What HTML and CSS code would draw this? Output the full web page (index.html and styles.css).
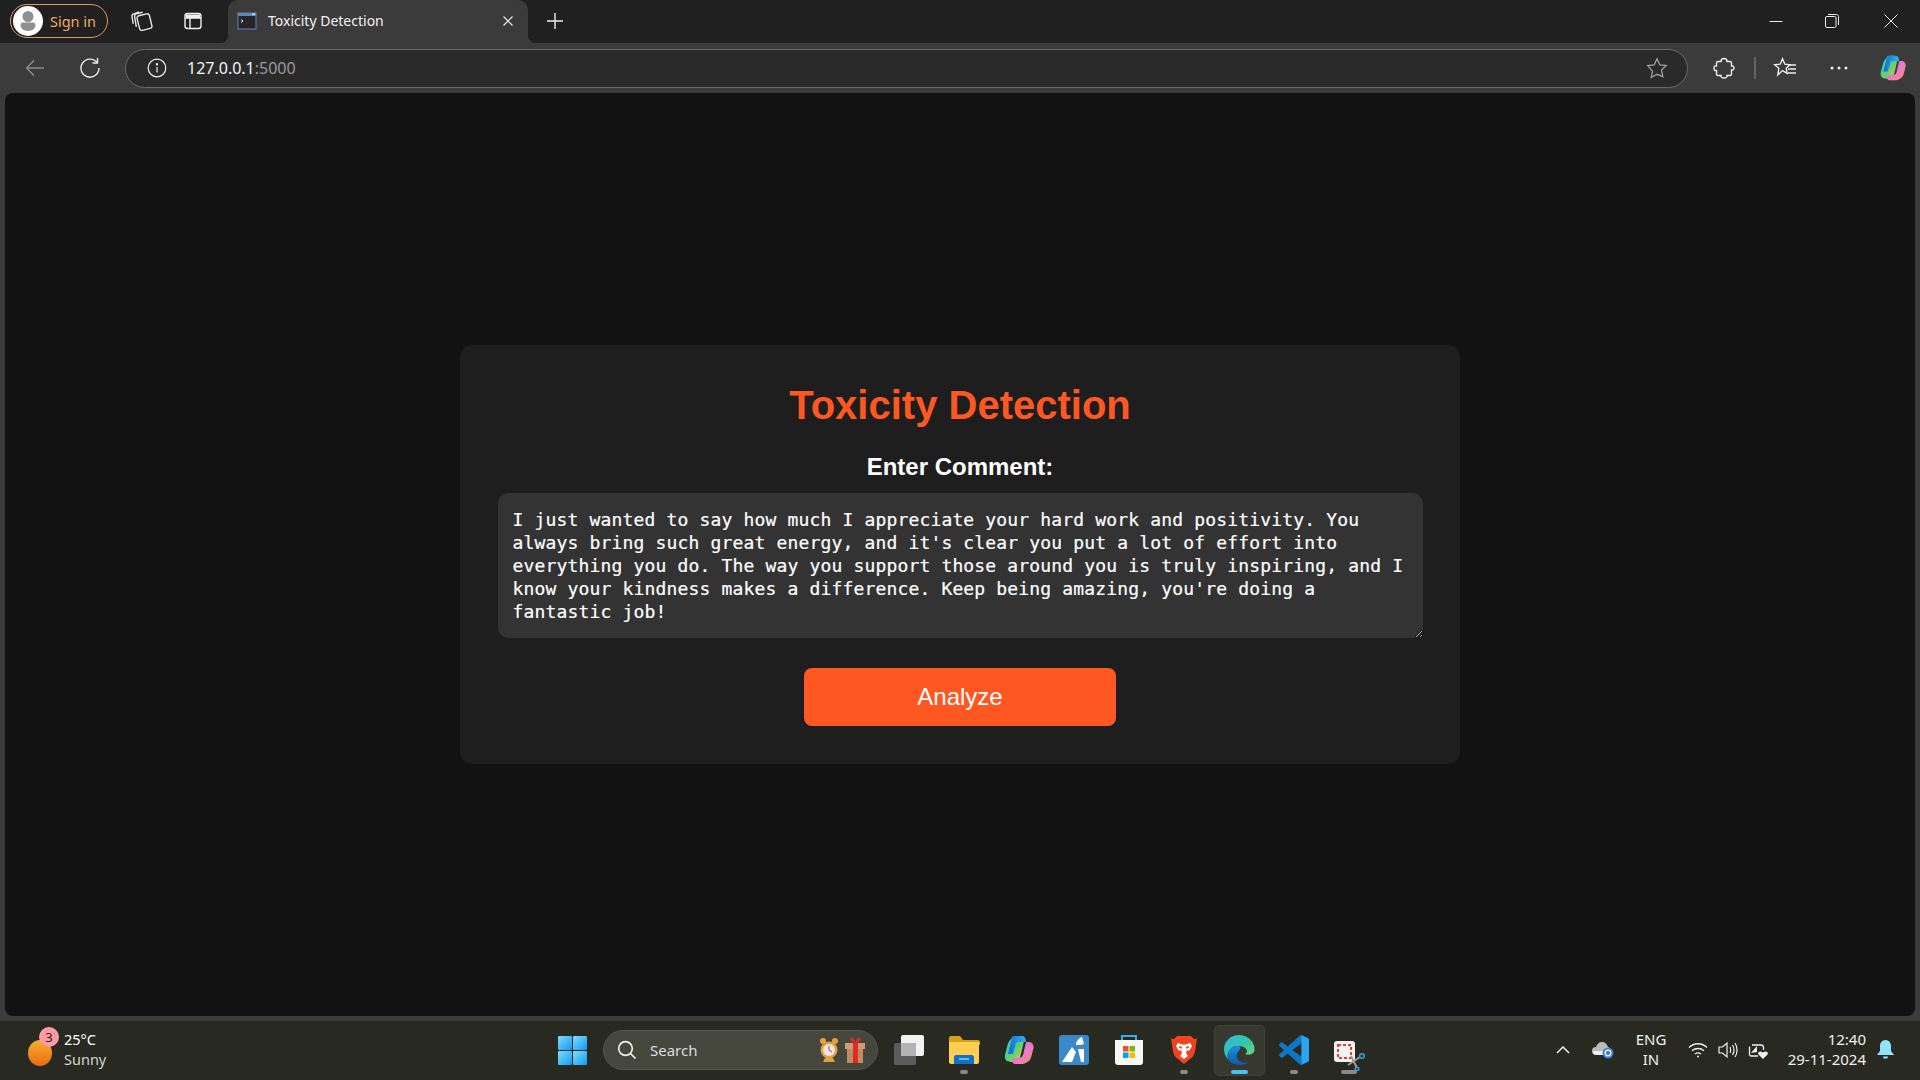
FILE: index.html
```html
<!DOCTYPE html>
<html>
    <head>
        <meta charset="utf-8">
        <title>Toxicity Detection</title>
        <link rel="stylesheet" href="styles.css">
    </head>
    <body>
        <svg class="defs" width="0" height="0">
            <defs>
                <linearGradient id="copA" x1="0" y1="0" x2="1" y2="1">
                    <stop offset="0" stop-color="#2fc4e8"/>
                    <stop offset="0.5" stop-color="#4fd37a"/>
                    <stop offset="1" stop-color="#f4c430"/>
                </linearGradient>
                <linearGradient id="copB" x1="0" y1="0" x2="1" y2="1">
                    <stop offset="0" stop-color="#c86be0"/>
                    <stop offset="0.6" stop-color="#ee7dc0"/>
                    <stop offset="1" stop-color="#f78a5c"/>
                </linearGradient>
                <linearGradient id="copC" x1="0" y1="0" x2="1" y2="0">
                    <stop offset="0" stop-color="#1668d8"/>
                    <stop offset="1" stop-color="#2fb4ee"/>
                </linearGradient>
                <linearGradient id="edgeA" x1="0" y1="0" x2="1" y2="1">
                    <stop offset="0" stop-color="#2fb6e8"/>
                    <stop offset="0.55" stop-color="#35c6a4"/>
                    <stop offset="1" stop-color="#7ee36a"/>
                </linearGradient>
                <linearGradient id="edgeB" x1="0" y1="0" x2="0" y2="1">
                    <stop offset="0" stop-color="#1a8fe0"/>
                    <stop offset="1" stop-color="#0c5aa8"/>
                </linearGradient>
                <linearGradient id="winBlue" x1="0" y1="0" x2="1" y2="1">
                    <stop offset="0" stop-color="#7fdcfb"/>
                    <stop offset="1" stop-color="#0f9bf2"/>
                </linearGradient>
                <linearGradient id="orb" x1="0" y1="0" x2="0" y2="1">
                    <stop offset="0" stop-color="#f5b12a"/>
                    <stop offset="1" stop-color="#ea6a14"/>
                </linearGradient>
                <symbol id="copilot" viewBox="0 0 32 32">
                    <path d="M11 2h7c2 0 3 1 3.500 3L17 24c-.6 2.500-2 4-4.500 4H8c-4 0-7-2-6-7l2-8c1-4 2-6 4-8 1-1.500 2-3 3-3z" fill="url(#copA)"/>
                    <path d="M11 2h8c2 0 3 1 3.500 3l.5 3h-7c-2 0-3 1-3.500 3L10 20H5l3-12c1-3 1.500-6 3-6z" fill="url(#copC)"/>
                    <path d="M23 8h3c3 0 5 3 4.500 6l-2 8c-1 4-3 6-6 7-1 .4-2 1-3 1h-7c-2 0-3-1-3.500-3L10 24h6c2 0 3-1 4-3z" fill="url(#copB)"/>
                </symbol>
            </defs>
        </svg>

        <div class="window">
            <div class="tabstrip">
                <div class="signin">
                    <span class="avatar">
                        <svg width="30" height="30" viewBox="0 0 30 30">
                            <circle cx="15" cy="15" r="15" fill="#fff"/>
                            <circle cx="15" cy="10.500" r="5.500" fill="#8f8f8f"/>
                            <path d="M7.500 19c0-1.500 1-2.500 2.500-2.500h10c1.500 0 2.500 1 2.500 2.500 0 3-3 6-7.500 6s-7.500-3-7.500-6z" fill="#8f8f8f"/>
                        </svg>
                    </span>
                    <span>Sign in</span>
                </div>
                <div class="strip-btn strip-first">
                    <svg width="23" height="23" viewBox="0 0 20 20" fill="none" stroke="#e8e8e8" stroke-width="1.200">
                        <rect x="7" y="5" width="11" height="13" rx="2" transform="rotate(-14 12 11)"/>
                        <path d="M5.500 15.500 4 6.500c-.2-1.200.4-2 1.500-2.300L11 2.800"/>
                        <path d="M2.800 13 1.700 6.500c-.2-1.200.4-2 1.500-2.300L8 2.500"/>
                    </svg>
                </div>
                <div class="strip-btn">
                    <svg width="20" height="20" viewBox="0 0 20 20" fill="none" stroke="#f0f0f0" stroke-width="1.400">
                        <rect x="2" y="2.500" width="16" height="15" rx="2.500"/>
                        <path d="M2 7h16M7 7v10.500"/>
                        <path d="M3 3.500h14V7H3z" fill="#f0f0f0" stroke="none"/>
                    </svg>
                </div>
                <div class="tab">
                    <svg class="favicon" width="20" height="18" viewBox="0 0 20 18">
                        <rect x="0.500" y="0.500" width="19" height="17" fill="#5f87b8"/>
                        <rect x="1.500" y="4" width="17" height="12.500" fill="#26262a"/>
                        <rect x="15" y="1.500" width="3" height="1.500" fill="#d8d8d8"/>
                        <path d="M4 7.500 6 9l-2 1.500" fill="none" stroke="#e8e8e8" stroke-width="1"/>
                    </svg>
                    <span class="tab-title">Toxicity Detection</span>
                    <svg class="tab-close" width="12" height="12" viewBox="0 0 12 12" stroke="#eee" stroke-width="1.200">
                        <path d="M1.500 1.500l9 9M10.500 1.500l-9 9"/>
                    </svg>
                </div>
                <div class="strip-btn strip-new">
                    <svg width="18" height="18" viewBox="0 0 18 18" stroke="#eee" stroke-width="1.400">
                        <path d="M9 1v16M1 9h16"/>
                    </svg>
                </div>
                <div class="win-controls">
                    <div class="win-btn">
                        <svg width="14" height="14" viewBox="0 0 14 14" stroke="#eee" stroke-width="1">
                            <path d="M0.500 7.500h13"/>
                        </svg>
                    </div>
                    <div class="win-btn">
                        <svg width="14" height="14" viewBox="0 0 14 14" fill="none" stroke="#eee" stroke-width="1">
                            <rect x="0.500" y="2.500" width="10.500" height="11" rx="1.500"/>
                            <path d="M3 .5h8.500c1 0 2 1 2 2V11"/>
                        </svg>
                    </div>
                    <div class="win-btn win-close">
                        <svg width="14" height="14" viewBox="0 0 14 14" stroke="#eee" stroke-width="1">
                            <path d="M.5.5l13 13M13.500.5l-13 13"/>
                        </svg>
                    </div>
                </div>
            </div>

            <div class="toolbar">
                <div class="tool tool-back">
                    <svg width="20" height="20" viewBox="0 0 20 20" fill="none" stroke="#8c8c8c" stroke-width="1.400">
                        <path d="M19 10H1.500M9 2.500 1.500 10 9 17.500"/>
                    </svg>
                </div>
                <div class="tool tool-reload">
                    <svg width="22" height="22" viewBox="0 0 22 22" fill="none" stroke="#eee" stroke-width="1.400">
                        <path d="M18 5.500A9 9 0 1 0 20 11"/>
                        <path d="M18.500 1v5h-5"/>
                    </svg>
                </div>
                <div class="address">
                    <svg class="info" width="20" height="20" viewBox="0 0 20 20" fill="none" stroke="#eee" stroke-width="1.200">
                        <circle cx="10" cy="10" r="8.800"/>
                        <path d="M10 9v5.500"/>
                        <circle cx="10" cy="6.200" r=".6" fill="#eee"/>
                    </svg>
                    <span class="url">127.0.0.1<span class="url-port">:5000</span></span>
                    <svg class="star" width="22" height="22" viewBox="0 0 22 22" fill="none" stroke="#a0a0a0" stroke-width="1.300">
                        <path d="M11 1.800l2.800 6 6.500.8-4.800 4.500 1.300 6.500L11 17.300l-5.800 3.300 1.300-6.500L1.700 8.600l6.500-.8z"/>
                    </svg>
                </div>
                <div class="tool tool-first">
                    <svg width="22" height="22" viewBox="0 0 22 22" fill="none" stroke="#eee" stroke-width="1.400">
                        <path d="M8 4.500C8 2.500 9.500 1.500 11 1.500s3 1 3 3h3A1.500 1.500 0 0 1 18.500 6v3c2-.5 2.500 1 2.500 2s-.5 2.500-2.500 2v4a1.500 1.500 0 0 1-1.500 1.500h-3c.5 1.500-1 2.500-3 2.500s-3.500-1-3-2.500H5A1.500 1.500 0 0 1 3.500 17v-3.500C1.500 14 1 12.500 1 11s.5-2.500 2.500-2V6A1.500 1.500 0 0 1 5 4.500z"/>
                    </svg>
                </div>
                <span class="tool-sep"></span>
                <div class="tool tool-favs">
                    <svg width="24" height="22" viewBox="0 0 24 22" fill="none" stroke="#eee" stroke-width="1.400">
                        <path d="M9.500 1.800l2.300 5.400 5.200.5-3.800 3.600 1 5-4.700-2.700-4.700 4.300 1-6.600L1.600 7.700l5.600-.5z"/>
                        <path d="M15 8h8M15 12h8M15 16h8"/>
                    </svg>
                </div>
                <div class="tool">
                    <svg width="18" height="4" viewBox="0 0 18 4" fill="#eee">
                        <circle cx="2" cy="2" r="1.500"/>
                        <circle cx="9" cy="2" r="1.500"/>
                        <circle cx="16" cy="2" r="1.500"/>
                    </svg>
                </div>
                <div class="tool">
                    <svg width="28" height="28"><use href="#copilot"/></svg>
                </div>
            </div>

            <div class="viewport">
                <div class="container">
                    <h1>Toxicity Detection</h1>
                    <label class="comment-label" for="comment">Enter Comment:</label>
                    <textarea id="comment" class="comment" spellcheck="false">I just wanted to say how much I appreciate your hard work and positivity. You always bring such great energy, and it's clear you put a lot of effort into everything you do. The way you support those around you is truly inspiring, and I know your kindness makes a difference. Keep being amazing, you're doing a fantastic job!</textarea>
                    <button class="analyze">Analyze</button>
                </div>
            </div>
        </div>

        <footer class="taskbar">
            <div class="weather">
                <span class="orb">
                    <svg width="26" height="36" viewBox="0 0 26 36">
                        <ellipse cx="12" cy="21" rx="12" ry="13" fill="url(#orb)"/>
                    </svg>
                    <span class="badge">3</span>
                </span>
                <div class="weather-text">
                    <span>25°C</span>
                    <span class="weather-sub">Sunny</span>
                </div>
            </div>
            <div class="start">
                <svg width="29" height="29" viewBox="0 0 29 29" fill="url(#winBlue)">
                    <rect width="14" height="14" rx="1"/>
                    <rect x="15" width="14" height="14" rx="1"/>
                    <rect y="15" width="14" height="14" rx="1"/>
                    <rect x="15" y="15" width="14" height="14" rx="1"/>
                </svg>
            </div>
            <div class="search">
                <svg width="20" height="20" viewBox="0 0 20 20" fill="none" stroke="#eee" stroke-width="1.700">
                    <circle cx="8.500" cy="8.500" r="6.800"/>
                    <path d="M13.500 13.500l5 5"/>
                </svg>
                <span class="search-text">Search</span>
                <svg class="search-alarm" width="20" height="26" viewBox="0 0 20 26">
                    <circle cx="4" cy="4" r="3" fill="#e9a13b"/>
                    <circle cx="16" cy="4" r="3" fill="#e9a13b"/>
                    <circle cx="10" cy="13" r="8.500" fill="#d9a441"/>
                    <circle cx="10" cy="13" r="6" fill="#f4e2e6"/>
                    <path d="M10 9v4l3 2" fill="none" stroke="#8a5a44" stroke-width="1"/>
                    <path d="M4 25l2-4h8l2 4z" fill="#d9a441"/>
                </svg>
                <svg class="search-gift" width="20" height="26" viewBox="0 0 20 26">
                    <rect x="2" y="9" width="16" height="17" fill="#c08a62"/>
                    <rect x="0" y="6" width="20" height="6" fill="#d19a70"/>
                    <rect x="8" y="6" width="5" height="20" fill="#e02a24"/>
                    <path d="M10.500 6C6 6 4 1 6 .5c2-.5 4 2.500 4.500 5.500 .5-3 2.500-6 4.500-5.500C17 1 15 6 10.500 6z" fill="#e02a24"/>
                </svg>
            </div>
            <div class="pinned">
                <div class="pin">
                    <svg width="32" height="32" viewBox="0 0 32 32">
                        <rect x="1" y="9" width="22" height="22" rx="2" fill="#5c5c5c"/>
                        <rect x="8" y="1" width="23" height="21" rx="2" fill="#f2f2f2"/>
                        <rect x="8" y="9" width="15" height="13" fill="#b4b4b4"/>
                    </svg>
                </div>
                <div class="pin pin-open">
                    <svg width="32" height="30" viewBox="0 0 32 30">
                        <path d="M1 3c0-1 .6-2 2-2h9l3 4h15c1 0 2 1 2 2v3H1z" fill="#d8a214"/>
                        <path d="M1 7h30v20c0 1-1 2-2 2H3c-1 0-2-1-2-2z" fill="#fdce50"/>
                        <path d="M6 29V22c0-1 1-2 2-2h16c1 0 2 1 2 2v7z" fill="#0f72c9"/>
                        <path d="M11 24h10" stroke="#8fd0f5" stroke-width="1.500"/>
                    </svg>
                </div>
                <div class="pin">
                    <svg width="32" height="32"><use href="#copilot"/></svg>
                </div>
                <div class="pin">
                    <svg width="30" height="30" viewBox="0 0 30 30">
                        <rect width="30" height="30" rx="3" fill="#3b88c8"/>
                        <path d="M3 27 13 12l4 5-4 10z" fill="#fff"/>
                        <path d="M17 10c0-4 3-7 6-8l2 7-3 1z" fill="#fff"/>
                        <path d="M19 14h6v13h-3z" fill="#fff"/>
                    </svg>
                </div>
                <div class="pin">
                    <svg width="30" height="32" viewBox="0 0 30 32">
                        <path d="M8 6V2h14v4" fill="none" stroke="#2fb2e8" stroke-width="2"/>
                        <path d="M1 6h28v22c0 2-1 3-3 3H4c-2 0-3-1-3-3z" fill="#f7f7f7"/>
                        <rect x="9" y="12" width="5.500" height="5.500" fill="#f25022"/>
                        <rect x="15.500" y="12" width="5.500" height="5.500" fill="#7fba00"/>
                        <rect x="9" y="18.500" width="5.500" height="5.500" fill="#00a4ef"/>
                        <rect x="15.500" y="18.500" width="5.500" height="5.500" fill="#ffb900"/>
                    </svg>
                </div>
                <div class="pin pin-open">
                    <svg width="26" height="30" viewBox="0 0 26 30">
                        <path d="M6 1h14l3 3 3-.5L24 16c-.6 4-2 6-5 8l-6 5-6-5c-3-2-4.400-4-5-8L0 3.500 3 4z" fill="#f0431e"/>
                        <path d="M7 8l4 1.500h4L19 8l2 3-3 5-2-1-1 3 2 3-4 3-4-3 2-3-1-3-2 1-3-5z" fill="#fff"/>
                        <path d="M8 12l3 1M18 12l-3 1" stroke="#f0431e" stroke-width="1.500"/>
                    </svg>
                </div>
                <div class="pin pin-active">
                    <svg width="32" height="32" viewBox="0 0 32 32">
                        <path d="M16 1C7 1 1 8 1 15c0 4 1.500 8 4 10-2-7 3-13 10-13 6 0 9 3 9 5 0 1.500-1 2.500-2 3 5 2 9-.5 9.500-4C32 8 25 1 16 1z" fill="url(#edgeA)"/>
                        <path d="M15 12C8 12 3 18 5 25c2.500 4 7 6 12 6 4 0 7-1 9-3-3 1.500-10 1-12-4-1-3 0-6 3-8.500 1-1 0-3.500-2-3.500z" fill="url(#edgeB)"/>
                    </svg>
                </div>
                <div class="pin pin-open">
                    <svg width="30" height="30" viewBox="0 0 100 100">
                        <path d="M70.900 99.300a6.200 6.200 0 0 0 5-.2l20.600-9.900A6.250 6.250 0 0 0 100 83.600V16.400a6.250 6.250 0 0 0-3.500-5.600L75.900.9a6.200 6.200 0 0 0-7.100 1.200L29.400 38.100 12.200 25a4.200 4.200 0 0 0-5.300.2l-5.500 5.100a4.200 4.200 0 0 0 0 6.200L16.300 50 1.400 63.600a4.200 4.200 0 0 0 0 6.200l5.500 5a4.200 4.200 0 0 0 5.300.2l17.200-13.100 39.400 35.900a6.200 6.200 0 0 0 2.100 1.400zM75 27.300 45.100 50 75 72.700z" fill="#0e76c4" fill-rule="evenodd"/>
                        <path d="M75 .6l21.500 10.200a6.250 6.250 0 0 1 3.500 5.600v67.200a6.250 6.250 0 0 1-3.500 5.600L75 99.500z" fill="#2ca5ee"/>
                    </svg>
                </div>
                <div class="pin pin-open pin-snip">
                    <svg width="32" height="32" viewBox="0 0 32 32">
                        <rect x="1" y="2" width="21" height="21" rx="3" fill="#f2f2f2"/>
                        <rect x="5" y="6" width="13" height="13" fill="none" stroke="#d9432e" stroke-width="2" stroke-dasharray="3 2"/>
                        <path d="M18 17l6 12M27 18l-12 8" stroke="#9a9a9a" stroke-width="2"/>
                        <circle cx="29" cy="17" r="2.300" fill="none" stroke="#2fa4dc" stroke-width="1.500"/>
                        <circle cx="24" cy="30" r="1.800" fill="none" stroke="#2fa4dc" stroke-width="1.500"/>
                    </svg>
                </div>
            </div>
            <div class="tray">
                <div class="tray-slot">
                    <svg width="14" height="8" viewBox="0 0 14 8" fill="none" stroke="#eee" stroke-width="1.500">
                        <path d="M1 7l6-6 6 6"/>
                    </svg>
                </div>
                <div class="tray-slot tray-cloud">
                    <svg width="22" height="18" viewBox="0 0 22 18">
                        <path d="M4 14a4 4 0 0 1 0-8c1-3 3-5 6-5 3 0 5 2 6 5h1v8z" fill="#b9b9b9"/>
                        <path d="M1 10h11v4H4c-2 0-3-2-3-4z" fill="#eee"/>
                        <circle cx="16" cy="12" r="5.500" fill="#3b82d8"/>
                        <circle cx="16" cy="12" r="2.800" fill="none" stroke="#fff" stroke-width="1.200"/>
                    </svg>
                </div>
                <div class="lang">
                    <span>ENG</span>
                    <span>IN</span>
                </div>
                <div class="tray-slot tray-wifi">
                    <svg width="20" height="16" viewBox="0 0 20 16" fill="none" stroke="#eee" stroke-width="1.400">
                        <path d="M1 5.500c5-5 13-5 18 0M4 8.800c3.500-3 8.500-3 12 0M7 12c2-1.500 4-1.500 6 0"/>
                        <circle cx="10" cy="14.500" r="1" fill="#eee" stroke="none"/>
                    </svg>
                </div>
                <div class="tray-slot">
                    <svg width="20" height="18" viewBox="0 0 20 18" fill="none" stroke="#eee" stroke-width="1.200">
                        <path d="M1 6h3.500L9 2v14l-4.500-4H1z"/>
                        <path d="M12 6c1 2 1 4 0 6M14.500 4c1.800 3 1.800 7 0 10M17 2c2.700 4 2.700 10 0 14"/>
                    </svg>
                </div>
                <div class="tray-slot">
                    <svg width="20" height="20" viewBox="0 0 20 20">
                        <path d="M4 5h9c1.500 0 2.500 1 2.500 2.500V10" fill="none" stroke="#eee" stroke-width="1.300"/>
                        <path d="M1.500 6.500v8c0 1 .6 1.500 1.500 1.500h7" fill="none" stroke="#eee" stroke-width="1.300"/>
                        <path d="M5 5 4 1M3 13l6-7v6z" fill="#eee"/>
                        <path d="M15 19l-4.500-4.500c-1.500-2 1.500-4.500 4.500-2 3-2.500 6 0 4.500 2z" fill="#eee"/>
                    </svg>
                </div>
                <div class="clock">
                    <span>12:40</span>
                    <span>29-11-2024</span>
                </div>
                <div class="tray-slot tray-bell">
                    <svg width="17" height="20" viewBox="0 0 17 20" fill="#8fe4fb">
                        <path d="M8.500 0C5 0 3 3 3 6v5l-3 4h17l-3-4V6c0-3-2-6-5.500-6z"/>
                        <path d="M6 16.500h5c0 3-5 3-5 0z"/>
                    </svg>
                </div>
            </div>
        </footer>
    </body>
</html>
```

FILE: styles.css
```css
* {
    box-sizing: border-box;
}

html, body {
    margin: 0;
    height: 100%;
}

body {
    width: 1920px;
    height: 1080px;
    overflow: hidden;
    display: flex;
    flex-direction: column;
    background-color: #3b3b3b;
    font-family: "Noto Sans", "Liberation Sans", sans-serif;
    color: #fff;
}

.defs {
    position: absolute;
}

/* browser window */
.window {
    height: 1021px;
    display: flex;
    flex-direction: column;
    padding-bottom: 5px;
}

.tabstrip {
    height: 43px;
    flex: none;
    padding-bottom: 2px;
    display: flex;
    align-items: center;
    background-color: #202020;
}

.signin {
    width: 98px;
    height: 34px;
    margin-left: 10px;
    padding-left: 3px;
    display: flex;
    align-items: center;
    gap: 7px;
    border: 1px solid #e29a58;
    border-radius: 17px;
    font-size: 14.500px;
    color: #f0a766;
}

.avatar {
    height: 30px;
    width: 30px;
    flex: none;
    margin-left: -1px;
}

.strip-btn {
    width: 36px;
    height: 36px;
    display: flex;
    align-items: center;
    justify-content: center;
}

.strip-first {
    margin-left: 15px;
    margin-right: 16px;
}

.strip-new {
    margin-left: 9px;
}

.tab {
    position: relative;
    width: 300px;
    height: 43px;
    margin-left: 17px;
    align-self: flex-start;
    padding: 0 14px 2px 9px;
    display: flex;
    align-items: center;
    background-color: #3b3b3b;
    border-radius: 10px 10px 0 0;
    font-size: 14px;
}

.tab::before,
.tab::after {
    content: "";
    position: absolute;
    bottom: 0;
    width: 8px;
    height: 8px;
}

.tab::before {
    left: -8px;
    background: radial-gradient(circle at 0 0, #202020 8px, #3b3b3b 8.500px);
}

.tab::after {
    right: -8px;
    background: radial-gradient(circle at 100% 0, #202020 8px, #3b3b3b 8.500px);
}

.tab-title {
    margin-left: 11px;
    flex: 1;
    color: #f2f2f2;
}

.win-controls {
    margin-left: auto;
    display: flex;
}

.win-btn {
    width: 56px;
    height: 41px;
    display: flex;
    align-items: center;
    justify-content: center;
}

.win-close {
    width: 58px;
    margin-left: 2px;
}

/* toolbar and address bar */
.toolbar {
    height: 50px;
    flex: none;
    padding-left: 15px;
    display: flex;
    align-items: center;
    gap: 14px;
    background-color: #3b3b3b;
}

.tool {
    width: 40px;
    height: 40px;
    flex: none;
    display: flex;
    align-items: center;
    justify-content: center;
}

.tool-reload {
    margin-left: 1px;
}

.tool-first {
    margin-left: 2px;
}

.tool-sep {
    width: 2px;
    height: 22px;
    margin: 0 -4px;
    background-color: #636363;
}

.tool-favs {
    margin-left: -1px;
}

.address {
    width: 1563px;
    height: 39px;
    margin-left: 1px;
    padding: 0 19px 0 21px;
    display: flex;
    align-items: center;
    background-color: #2a2a2a;
    border: 1px solid #6a6a6a;
    border-radius: 20px;
}

.url {
    margin-left: 20px;
    font-size: 16px;
    color: #f4f4f4;
}

.url-port {
    color: #9a9a9a;
}

.star {
    margin-left: auto;
}

/* the page itself */
.viewport {
    flex: 1;
    margin: 0 5px;
    display: flex;
    align-items: center;
    justify-content: center;
    background-color: #121212;
    border-radius: 8px;
    font-family: "Liberation Sans", Arial, sans-serif;
}

.container {
    width: 1000px;
    height: 419px;
    padding: 37px 0 38px;
    display: flex;
    flex-direction: column;
    align-items: center;
    background-color: #1e1e1e;
    border-radius: 12px;
}

h1 {
    margin: 0;
    font-size: 40px;
    line-height: 46px;
    font-weight: bold;
    color: #ff5722;
}

.comment-label {
    margin-top: 25px;
    font-size: 24px;
    line-height: 27px;
    font-weight: bold;
}

.comment {
    width: 925px;
    height: 145px;
    margin-top: 13px;
    padding: 15px;
    background-color: #333;
    border: none;
    border-radius: 10px;
    outline: none;
    color: #fff;
    font-family: "DejaVu Sans Mono", "Liberation Mono", monospace;
    font-size: 18px;
    letter-spacing: 0.16px;
    line-height: 23px;
    -webkit-text-stroke: 0.2px #fff;
}

.analyze {
    width: 312px;
    height: 58px;
    margin-top: 30px;
    background-color: #ff5722;
    border: none;
    border-radius: 8px;
    color: #fff;
    font-family: "Liberation Sans", Arial, sans-serif;
    font-size: 24px;
}

/* taskbar */
.taskbar {
    height: 59px;
    flex: none;
    padding-bottom: 1px;
    display: flex;
    align-items: center;
    background-color: #282a21;
    font-size: 14.500px;
}

.weather {
    width: 547px;
    padding-left: 28px;
    display: flex;
    align-items: center;
}

.orb {
    position: relative;
    width: 36px;
    height: 36px;
    flex: none;
}

.badge {
    position: absolute;
    left: 11px;
    top: -5px;
    width: 20px;
    height: 20px;
    border-radius: 50%;
    background-color: #ff9aa5;
    color: #222;
    font-size: 13px;
    line-height: 20px;
    text-align: center;
}

.weather-text {
    margin-bottom: 2px;
    display: flex;
    flex-direction: column;
    line-height: 20px;
}

.weather-sub {
    color: #d4d4d4;
}

.start {
    width: 50px;
    display: flex;
    justify-content: center;
}

.search {
    width: 275px;
    height: 40px;
    margin-left: 6px;
    padding: 0 12px 0 13px;
    display: flex;
    align-items: center;
    background-color: #45473d;
    border: 1px solid #55574d;
    border-radius: 20px;
}

.search-text {
    margin-left: 13px;
    font-size: 15px;
    color: #dedede;
}

.search-alarm {
    margin-left: auto;
}

.search-gift {
    margin-left: 6px;
}

.pinned {
    margin-left: 3px;
    display: flex;
}

.pin {
    position: relative;
    width: 55px;
    height: 58px;
    display: flex;
    align-items: center;
    justify-content: center;
}

.pin-open::after,
.pin-active::after {
    content: "";
    position: absolute;
    left: 50%;
    bottom: 5px;
    width: 8px;
    height: 4px;
    margin-left: -4px;
    border-radius: 2px;
    background-color: #8a8a8a;
}

.pin-active::before {
    content: "";
    position: absolute;
    top: 4px;
    left: 3px;
    width: 49px;
    height: 49px;
    border-radius: 5px;
    background-color: #37392f;
    border: 1px solid #41433a;
}

.pin-active svg {
    position: relative;
}

.pin-active::after {
    width: 17px;
    margin-left: -8px;
    background-color: #46c0f5;
}

.pin-snip {
    padding-top: 9px;
}

.pin-snip::after {
    width: 16px;
    margin-left: -8px;
}

.tray {
    margin-left: auto;
    padding-right: 22px;
    display: flex;
    align-items: center;
}

.tray-slot {
    width: 30px;
    height: 30px;
    display: flex;
    align-items: center;
    justify-content: center;
}

.tray-cloud {
    margin-left: 10px;
}

.lang {
    width: 46px;
    margin-left: 10px;
    margin-bottom: 2px;
    display: flex;
    flex-direction: column;
    align-items: center;
    line-height: 20px;
    color: #f0f0f0;
    font-size: 15px;
}

.tray-wifi {
    margin-left: 9px;
}

.clock {
    width: 93px;
    margin-bottom: 2px;
    display: flex;
    flex-direction: column;
    align-items: flex-end;
    line-height: 20px;
    color: #f0f0f0;
    font-size: 15px;
}

.tray-bell {
    width: 26px;
    margin-left: 6px;
}
```
